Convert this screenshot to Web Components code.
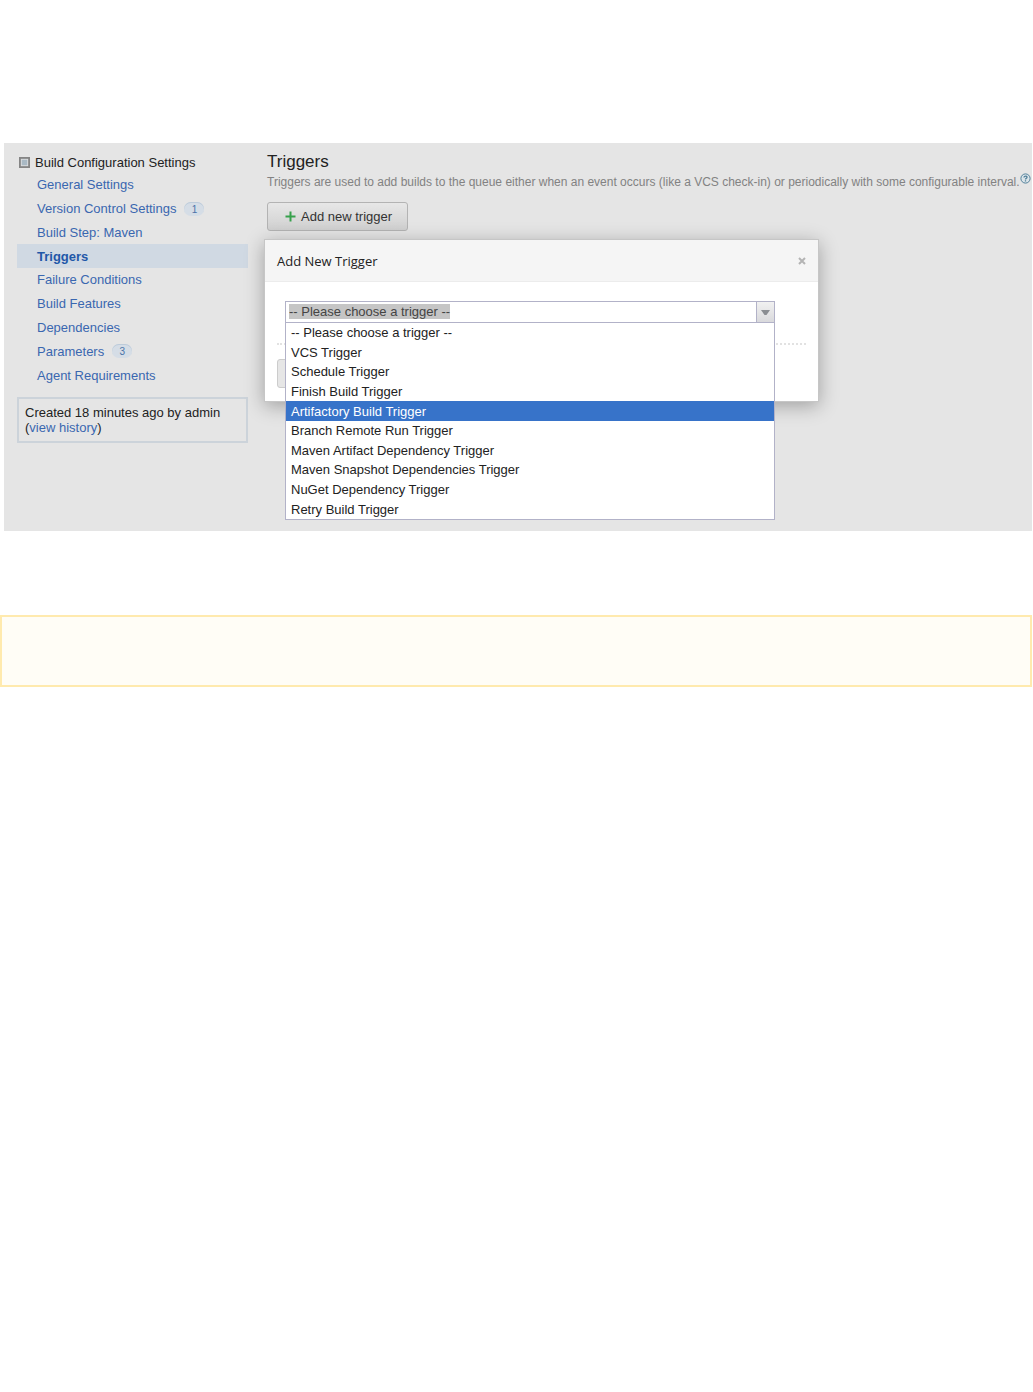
<!DOCTYPE html>
<html lang="en">
<head>
<meta charset="utf-8">
<title>Build Configuration Settings</title>
<style>
  body { margin: 0; background: #fff; color: #222; font: 13px/15px "Liberation Sans", Arial, sans-serif; }
</style>
</head>
<body>
<doc-page>
  <settings-screen>
    <settings-nav slot="nav" heading="Build Configuration Settings">
      <nav-item>General Settings</nav-item>
      <nav-item count="1">Version Control Settings</nav-item>
      <nav-item>Build Step: Maven</nav-item>
      <nav-item active>Triggers</nav-item>
      <nav-item>Failure Conditions</nav-item>
      <nav-item>Build Features</nav-item>
      <nav-item>Dependencies</nav-item>
      <nav-item count="3">Parameters</nav-item>
      <nav-item>Agent Requirements</nav-item>
    </settings-nav>
    <history-box slot="nav"></history-box>
    <triggers-intro></triggers-intro>
    <trigger-dialog slot="dialog" heading="Add New Trigger">
      <trigger-combo></trigger-combo>
    </trigger-dialog>
  </settings-screen>
  <note-box></note-box>
</doc-page>

<script>
const define = (name, html, setup) => {
  const template = document.createElement('template');
  template.innerHTML = '<style>*{box-sizing:border-box}:host{display:block;box-sizing:border-box}</style>' + html;
  customElements.define(name, class extends HTMLElement {
    connectedCallback() {
      if (this.shadowRoot) return;
      const root = this.attachShadow({ mode: 'open' });
      root.append(template.content.cloneNode(true));
      if (setup) setup(this, root);
    }
  });
};

define('doc-page', `
  <style>:host{display:flex;flex-direction:column;gap:84px;padding:143px 1px 0 0}</style>
  <slot></slot>`);

define('note-box', `
  <style>:host{height:72px;border:2px solid #ffeaae;background:#fffdf6}</style>`);

define('settings-screen', `
  <style>
    :host{position:relative;display:flex;gap:19px;min-height:388px;margin-left:4px;padding:8px 0 0 13px;background:#e5e5e5}
    aside{flex:0 0 231px;display:flex;flex-direction:column;gap:10px}
    main{flex:1;min-width:0}
  </style>
  <aside><slot name="nav"></slot></aside>
  <main><slot></slot></main>
  <slot name="dialog"></slot>`);

define('settings-nav', `
  <style>
    h2{display:flex;align-items:center;gap:5px;height:22px;margin:0;padding-left:2px;font:inherit;color:#222}
    nav{display:grid;grid-auto-rows:1fr;height:214px}
    svg{display:block}
  </style>
  <h2><svg width="11" height="11" viewBox="0 0 12 12"><rect x="1" y="1" width="10" height="10" fill="#dcdedf" stroke="#858585" stroke-width="2"/><rect x="3" y="3" width="6" height="6" fill="#a9b9c4"/></svg><span></span></h2>
  <nav><slot></slot></nav>`,
  (el, root) => root.querySelector('span').textContent = el.getAttribute('heading'));

define('nav-item', `
  <style>
    :host{display:flex;align-items:center;gap:8px;padding-left:20px}
    :host([active]){background:#d0d9e3;font-weight:bold}
    a{color:#3a67b0;text-decoration:none}
    :host([active]) a{color:#1f57a8}
    b{width:20px;height:14px;border-radius:7px;background:#d5dde6;box-shadow:inset 0 1px #bccbda;color:#4b73a8;font:10px/15px "Liberation Sans",Arial,sans-serif;text-align:center}
  </style>
  <a href="#"><slot></slot></a>`,
  (el, root) => {
    if (el.hasAttribute('count')) {
      const badge = document.createElement('b');
      badge.textContent = el.getAttribute('count');
      root.append(badge);
    }
  });

define('history-box', `
  <style>
    :host{border:2px solid #ccd3da;padding:6px}
    a{color:#3a67b0;text-decoration:none}
  </style>
  Created 18 minutes ago by admin<br>(<a href="#">view history</a>)`);

define('triggers-intro', `
  <style>
    h1{margin:0;font-size:17px;line-height:22px;font-weight:normal}
    p{display:flex;margin:0 0 10px;height:19px;font-size:12px;line-height:19px;color:#828282;white-space:nowrap}
    svg{display:block}
    p a{line-height:0}
    button{display:flex;align-items:center;gap:5px;height:29px;padding:0 15px 0 17px;border:1px solid #b3b3b3;border-radius:3px;background:linear-gradient(#e7e7e7,#d0d0d0);color:#333;font:inherit}
  </style>
  <h1>Triggers</h1>
  <p><span>Triggers are used to add builds to the queue either when an event occurs (like a VCS check-in) or periodically with some configurable interval.</span>
    <a href="#" aria-label="Help"><svg width="11" height="11" viewBox="0 0 11 11" fill="none" stroke="#52809a"><circle cx="5.500" cy="5.500" r="4.600" fill="#dbe4e9"/><path d="M4 4.500C4 2.500 7.200 2.700 7 4.300C6.900 5.200 5.500 5.200 5.500 6.500M5.500 7.300V8.500" stroke-width="1.300"/></svg></a></p>
  <button type="button"><svg width="11" height="11" viewBox="0 0 11 11"><path d="M5.500 .5V10.500M.5 5.500H10.500" stroke="#37a14c" stroke-width="2"/></svg>Add new trigger</button>`);

define('trigger-dialog', `
  <style>
    :host{position:absolute;left:260px;top:96px;width:555px;border:1px solid #c6c6c6;background:#fff;box-shadow:0 4px 18px rgba(0,0,0,.3)}
    header{display:flex;align-items:center;justify-content:space-between;height:42px;padding:0 12px;border-bottom:1px solid #ececec;background:#f5f5f5}
    h2{margin:0;font:13px/18px "Open Sans","Noto Sans",sans-serif;color:#222}
    header button{padding:0;border:0;background:none}
    svg{display:block}
    section{padding:19px 12px 13px}
    .field{padding:0 31px 20px 8px;border-bottom:2px dotted #e2e2e2}
    footer{padding-top:14px}
    footer button{display:block;width:60px;height:29px;border:1px solid #ccc;border-radius:3px;background:#e6e6e6}
  </style>
  <header><h2></h2><button type="button" aria-label="Close"><svg width="8" height="8" viewBox="0 0 8 8"><path d="M1 1L7 7M7 1L1 7" stroke="#b4b4b4" stroke-width="2"/></svg></button></header>
  <section><div class="field"><slot></slot></div><footer><button type="button" aria-label="Save"></button></footer></section>`,
  (el, root) => root.querySelector('h2').textContent = el.getAttribute('heading'));

define('trigger-combo', `
  <style>
    :host{position:relative}
    .box{display:flex;height:22px;border:1px solid #b2b2c8;background:#fff}
    input{flex:1;min-width:0;padding:0 3px 1px;border:0;outline:0;background:#fff;color:#444;font:inherit}
    input::selection{background:#c5c5c5;color:#444}
    .box button{display:grid;place-items:center;width:18px;padding:0;border:0;border-left:1px solid #b2b2c8;background:linear-gradient(#f1f1f1,#d9d9dc)}
    ul{position:absolute;left:0;right:0;top:21px;display:grid;grid-auto-rows:1fr;height:198px;margin:0;padding:0;border:1px solid #b2b2c8;background:#fff;list-style:none}
    li{display:flex;align-items:center;padding-left:5px}
    li[aria-selected=true]{background:#3773c9;color:#fff}
  </style>
  <div class="box"><input type="text" role="combobox" aria-label="Trigger" aria-expanded="true" value="-- Please choose a trigger --" spellcheck="false"><button type="button" aria-label="Open the list"><svg width="9" height="5" viewBox="0 0 9 5"><path d="M0 0H9L5.500 5H3.500Z" fill="#8a8d92"/></svg></button></div>
  <ul role="listbox">
    <li role="option">-- Please choose a trigger --</li>
    <li role="option">VCS Trigger</li>
    <li role="option">Schedule Trigger</li>
    <li role="option">Finish Build Trigger</li>
    <li role="option" aria-selected="true">Artifactory Build Trigger</li>
    <li role="option">Branch Remote Run Trigger</li>
    <li role="option">Maven Artifact Dependency Trigger</li>
    <li role="option">Maven Snapshot Dependencies Trigger</li>
    <li role="option">NuGet Dependency Trigger</li>
    <li role="option">Retry Build Trigger</li>
  </ul>`);

const field = document.querySelector('trigger-combo').shadowRoot.querySelector('input');
field.focus();
field.select();
</script>
</body>
</html>
